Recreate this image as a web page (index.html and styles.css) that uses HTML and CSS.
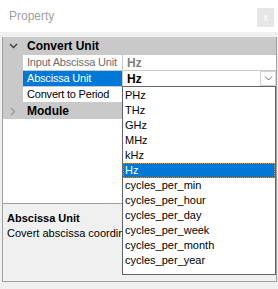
FILE: index.html
```html
<!DOCTYPE html>
<html lang="en">
<head>
  <meta charset="UTF-8">
  <meta name="viewport" content="width=device-width, initial-scale=1.0">
  <title>Property</title>
  <link rel="stylesheet" href="styles.css">
</head>
<body>
  <div class="window">
    <div class="titlebar">
      <span class="title">Property</span>
      <span class="close">x</span>
    </div>

    <div class="frame">
      <!-- Property grid -->
      <div class="grid">
        <div class="category">
          <span class="gutter">
            <svg width="9" height="6" viewBox="0 0 9 6"><path d="M1 1 L4.5 4.5 L8 1" fill="none" stroke="#3c3c3c" stroke-width="1.4"/></svg>
          </span>
          <span class="cat-name">Convert Unit</span>
        </div>
        <div class="row">
          <span class="gutter"></span>
          <span class="label readonly">Input Abscissa Unit</span>
          <span class="value readonly">Hz</span>
        </div>
        <div class="row">
          <span class="gutter"></span>
          <span class="label selected">Abscissa Unit</span>
          <span class="value bold">Hz
            <span class="drop-btn">
              <svg width="9" height="5" viewBox="0 0 9 5"><path d="M1 0.5 L4.5 4 L8 0.5" fill="none" stroke="#707070" stroke-width="1"/></svg>
            </span>
          </span>
        </div>
        <div class="row">
          <span class="gutter"></span>
          <span class="label">Convert to Period</span>
          <span class="value"></span>
        </div>
        <div class="category module">
          <span class="gutter">
            <svg width="6" height="9" viewBox="0 0 6 9"><path d="M1 1 L4.5 4.5 L1 8" fill="none" stroke="#9a9a9a" stroke-width="1.3"/></svg>
          </span>
          <span class="cat-name">Module</span>
        </div>
      </div>

      <!-- Description panel -->
      <div class="desc">
        <div class="desc-title">Abscissa Unit</div>
        <div class="desc-text">Covert abscissa coordinate unit.</div>
      </div>
    </div>

    <!-- Open dropdown of Abscissa Unit -->
    <ul class="dropdown">
      <li>PHz</li>
      <li>THz</li>
      <li>GHz</li>
      <li>MHz</li>
      <li>kHz</li>
      <li class="active">Hz</li>
      <li>cycles_per_min</li>
      <li>cycles_per_hour</li>
      <li>cycles_per_day</li>
      <li>cycles_per_week</li>
      <li>cycles_per_month</li>
      <li>cycles_per_year</li>
    </ul>
  </div>
</body>
</html>
```

FILE: styles.css
```css
* {
  margin: 0;
  padding: 0;
  box-sizing: border-box;
}

body {
  width: 278px;
  height: 289px;
  overflow: hidden;
  background: #f0f0f0;
  font-family: "Liberation Sans", Arial, sans-serif;
  font-size: 11px;
  color: #000;
}

.window {
  position: relative;
  height: 289px;
  display: flex;
  flex-direction: column;
}

.titlebar {
  height: 32px;
  flex: 0 0 32px;
  background: #fff;
  display: flex;
  align-items: center;
  justify-content: space-between;
  padding: 0 4px 0 9px;
}

.title {
  font-size: 12px;
  color: #a0a0a0;
}

.close {
  width: 17px;
  height: 19px;
  margin-top: 3px;
  background: #e6e6e6;
  color: #fff;
  font-size: 10px;
  display: flex;
  align-items: center;
  justify-content: center;
}

.frame {
  margin: 5px 1px 0 2px;
  border-left: 1px solid #a0a0a0;
  border-right: 1px solid #a0a0a0;
  display: flex;
  flex-direction: column;
}

/* Grid */
.grid {
  height: 167px;
  background: #fff;
  border-bottom: 1px solid #a0a0a0;
}

.category {
  height: 17px;
  display: flex;
  align-items: center;
  background: #c9c9c9;
}

.category.module {
  height: 17px;
  border-top: 1px solid #c9c9c9;
}

.gutter {
  width: 20px;
  align-self: stretch;
  background: #c9c9c9;
  display: flex;
  align-items: center;
  justify-content: center;
}

.cat-name {
  padding-left: 4px;
  font-size: 12px;
  font-weight: bold;
}

.row {
  height: 16px;
  display: flex;
}

.label {
  width: 100px;
  padding-left: 4px;
  border-top: 1px solid #c9c9c9;
  border-right: 1px solid #c9c9c9;
  line-height: 15px;
  letter-spacing: -0.2px;
  white-space: nowrap;
  overflow: hidden;
}

.label.readonly {
  color: #6d6d6d;
}

.label.selected {
  background: #0078d7;
  color: #fff;
}

.value {
  flex: 1;
  display: flex;
  align-items: center;
  justify-content: space-between;
  padding-left: 4px;
  border-top: 1px solid #c9c9c9;
  font-size: 12px;
}

.value.readonly {
  color: #808080;
  font-weight: bold;
}

.value.bold {
  font-weight: bold;
}

.drop-btn {
  width: 16px;
  height: 15px;
  border: 1px solid #d4d4d4;
  background: #fdfdfd;
  display: flex;
  align-items: center;
  justify-content: center;
}

/* Description */
.desc {
  height: 78px;
  padding: 7px 4px 0;
  border-bottom: 1px solid #a0a0a0;
  background: #f0f0f0;
  line-height: 14px;
}

.desc-title {
  font-weight: bold;
  margin-bottom: 1px;
}

/* the open list covers the rest of the line */
.desc-text {
  width: 115px;
  white-space: nowrap;
  overflow: hidden;
}

/* Dropdown list */
.dropdown {
  position: absolute;
  left: 122px;
  top: 86px;
  width: 154px;
  height: 189px;
  list-style: none;
  background: #fff;
  border: 1px solid #646464;
  padding: 1px 0 6px;
}

.dropdown li {
  height: 15px;
  line-height: 15px;
  padding-left: 2px;
}

.dropdown li.active {
  background: #0078d7;
  color: #fff;
  outline: 1px dotted #c89040;
  outline-offset: -1px;
}
```
